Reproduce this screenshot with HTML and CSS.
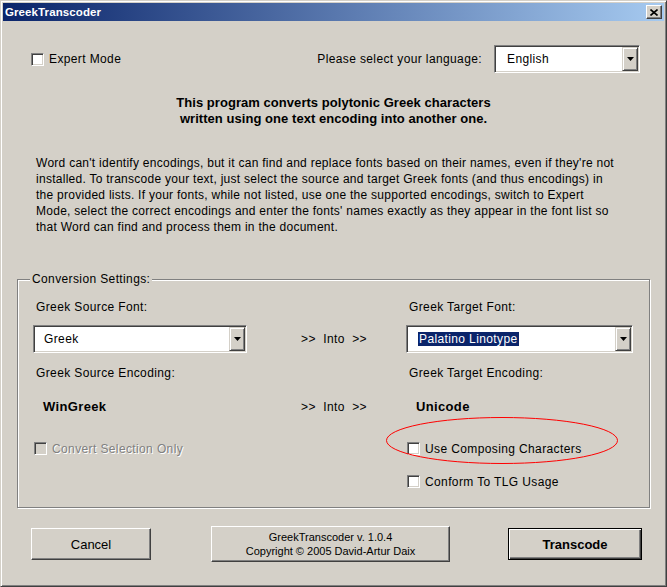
FILE: index.html
```html
<!DOCTYPE html>
<html>
<head>
<meta charset="utf-8">
<link rel="stylesheet" href="styles.css">
</head>
<body>
<div class="window">
  <div class="titlebar">
    <span class="title">GreekTranscoder</span>
    <span class="close raised"><svg width="8" height="7" viewBox="0 0 8 7"><path d="M0.5 0.5 L7.5 6.5 M7.5 0.5 L0.5 6.5" stroke="#000" stroke-width="1.6" fill="none"/></svg></span>
  </div>
  <div class="client">
    <div class="toprow">
      <div class="check"><span class="box"></span><span>Expert Mode</span></div>
      <div class="lang">
        <span>Please select your language:</span>
        <div class="combo lang-combo">
          <span class="combo-text">English</span>
          <span class="combo-btn"><svg width="7" height="4" viewBox="0 0 7 4"><polygon points="0,0 7,0 3.5,4" fill="#000"/></svg></span>
        </div>
      </div>
    </div>
    <p class="intro">This program converts polytonic Greek characters<br>written using one text encoding into another one.</p>
    <p class="desc">Word can't identify encodings, but it can find and replace fonts based on their names, even if they're not<br>installed. To transcode your text, just select the source and target Greek fonts (and thus encodings) in<br>the provided lists. If your fonts, while not listed, use one the supported encodings, switch to Expert<br>Mode, select the correct encodings and enter the fonts' names exactly as they appear in the font list so<br>that Word can find and process them in the document.</p>
    <div class="group">
      <span class="legend">Conversion Settings:</span>
      <div class="row r1">
        <span class="label">Greek Source Font:</span>
        <span></span>
        <span class="label">Greek Target Font:</span>
      </div>
      <div class="row r2">
        <div class="combo src-combo">
          <span class="combo-text">Greek</span>
          <span class="combo-btn"><svg width="7" height="4" viewBox="0 0 7 4"><polygon points="0,0 7,0 3.5,4" fill="#000"/></svg></span>
        </div>
        <span class="into">&gt;&gt;  Into  &gt;&gt;</span>
        <div class="combo tgt-combo">
          <span class="combo-text"><span class="sel">Palatino Linotype</span></span>
          <span class="combo-btn"><svg width="7" height="4" viewBox="0 0 7 4"><polygon points="0,0 7,0 3.5,4" fill="#000"/></svg></span>
        </div>
      </div>
      <div class="row r3">
        <span class="label">Greek Source Encoding:</span>
        <span></span>
        <span class="label">Greek Target Encoding:</span>
      </div>
      <div class="row r4">
        <span class="value">WinGreek</span>
        <span class="into">&gt;&gt;  Into  &gt;&gt;</span>
        <span class="value">Unicode</span>
      </div>
      <div class="row r5">
        <div class="check disabled"><span class="box"></span><span class="ctext">Convert Selection Only</span></div>
        <span></span>
        <div class="check"><span class="box"></span><span class="ctext">Use Composing Characters</span></div>
      </div>
      <div class="row r6">
        <span></span>
        <span></span>
        <div class="check"><span class="box"></span><span class="ctext">Conform To TLG Usage</span></div>
      </div>
      <svg class="ring" width="232" height="47" viewBox="0 0 232 47"><ellipse cx="116" cy="23.5" rx="115.5" ry="23" stroke="#ff0000" stroke-width="1" fill="none"/></svg>
    </div>
    <div class="buttons">
      <div class="btn raised cancel">Cancel</div>
      <div class="btn raised about"><span>GreekTranscoder v. 1.0.4</span><span>Copyright © 2005 David-Artur Daix</span></div>
      <div class="btn transcode">Transcode</div>
    </div>
  </div>
</div>
</body>
</html>
```
FILE: styles.css
```css
* { box-sizing: border-box; }
html, body { margin: 0; padding: 0; }
body {
  width: 667px;
  height: 587px;
  overflow: hidden;
  background: #d4d0c8;
  font-family: "Liberation Sans", Arial, sans-serif;
  font-size: 12px;
  letter-spacing: 0.38px;
  color: #000;
}
.window {
  width: 667px;
  height: 587px;
  background: #d4d0c8;
  border: 1px solid;
  border-color: #d4d0c8 #404040 #404040 #d4d0c8;
  box-shadow: inset 1px 1px #fff, inset -1px -1px #808080;
  padding: 2px;
  display: flex;
  flex-direction: column;
}
.titlebar {
  height: 18px;
  flex: none;
  background: linear-gradient(to right, #0a246a, #a6caf0);
  display: flex;
  align-items: center;
  justify-content: space-between;
  padding: 0 2px;
}
.title {
  color: #fff;
  font-weight: bold;
  font-size: 11.5px;
  letter-spacing: 0.1px;
  line-height: 18px;
}
.raised {
  background: #d4d0c8;
  border: 1px solid;
  border-color: #fff #404040 #404040 #fff;
  box-shadow: inset -1px -1px #808080;
}
.close {
  width: 16px;
  height: 14px;
  display: flex;
  align-items: center;
  justify-content: center;
}
.close svg { display: block; }
.client { flex: 1; }
.toprow {
  margin-top: 24px;
  height: 28px;
  display: flex;
  align-items: center;
  justify-content: space-between;
  padding: 0 24px 0 28px;
}
.check {
  display: flex;
  align-items: center;
  gap: 5px;
  line-height: 14px;
  white-space: nowrap;
}
.ctext { padding-top: 2px; }
.box {
  flex: none;
  width: 13px;
  height: 13px;
  background: #fff;
  border: 1px solid;
  border-color: #808080 #fff #fff #808080;
  box-shadow: inset 1px 1px #404040, inset -1px -1px #d4d0c8;
}
.check.disabled { color: #808080; text-shadow: 1px 1px 0 #fff; }
.check.disabled .box { background: #d4d0c8; }
.lang { display: flex; align-items: center; gap: 12px; }
.combo {
  height: 28px;
  background: #fff;
  border: 1px solid;
  border-color: #808080 #fff #fff #808080;
  box-shadow: inset 1px 1px #404040, inset -1px -1px #d4d0c8;
  display: flex;
  align-items: center;
  justify-content: space-between;
}
.lang-combo { width: 146px; }
.src-combo { width: 214px; }
.tgt-combo { width: 227px; }
.combo-text { padding-left: 10px; line-height: 14px; white-space: nowrap; }
.lang-combo .combo-text { padding-left: 12px; }
.tgt-combo .combo-text { padding-left: 11px; }
.sel { background: #0a246a; color: #fff; padding: 0 1px; }
.combo-btn {
  width: 16px;
  height: 24px;
  margin-right: 1px;
  background: #d4d0c8;
  border: 1px solid;
  border-color: #d4d0c8 #404040 #404040 #d4d0c8;
  box-shadow: inset 1px 1px #fff, inset -1px -1px #808080;
  display: flex;
  align-items: center;
  justify-content: center;
}
.combo-btn svg { display: block; }
.intro {
  margin: 22px 0 0;
  text-align: center;
  font-weight: bold;
  font-size: 13px;
  letter-spacing: 0.05px;
  line-height: 16px;
}
.desc {
  margin: 28px 0 0;
  padding-left: 33px;
  line-height: 16px;
  letter-spacing: 0.27px;
  white-space: nowrap;
}
.group {
  position: relative;
  margin: 44px 0 0 14px;
  width: 633px;
  height: 229px;
  border: 1px solid #808080;
  box-shadow: 1px 1px 0 #fff, inset 1px 1px 0 #fff;
  padding: 20px 0 0 15px;
}
.legend {
  position: absolute;
  top: -8px;
  left: 12px;
  padding: 0 2px;
  background: #d4d0c8;
  line-height: 14px;
}
.row {
  display: grid;
  grid-template-columns: 268px 105px 227px;
  align-items: center;
}
.r1, .r3 { height: 14px; line-height: 14px; }
.r2 { margin-top: 11px; height: 28px; }
.r3 { margin-top: 13px; }
.r4 { margin-top: 19px; height: 16px; line-height: 16px; }
.r5 { margin-top: 25px; height: 14px; }
.r6 { margin-top: 19px; height: 14px; }
.label { padding-left: 3px; }
.value { padding-left: 10px; font-weight: bold; font-size: 13px; letter-spacing: 0.35px; }
.into { white-space: pre; }
.r5 .check, .r6 .check { padding-left: 1px; }
.ring {
  position: absolute;
  left: 368px;
  top: 137px;
}
.buttons {
  margin-top: 18px;
  height: 36px;
  display: flex;
  align-items: center;
  padding-left: 28px;
}
.btn {
  display: flex;
  align-items: center;
  justify-content: center;
  letter-spacing: 0;
}
.cancel { width: 120px; height: 32px; font-size: 13px; }
.about {
  width: 239px;
  height: 36px;
  margin-left: 60px;
  flex-direction: column;
  font-size: 11px;
  line-height: 14px;
}
.transcode {
  width: 134px;
  height: 32px;
  margin-left: 58px;
  font-weight: bold;
  font-size: 13px;
  background: #d4d0c8;
  border: 1px solid #000;
  box-shadow: inset 1px 1px #fff, inset -1px -1px #404040, inset -2px -2px #808080;
}
```
